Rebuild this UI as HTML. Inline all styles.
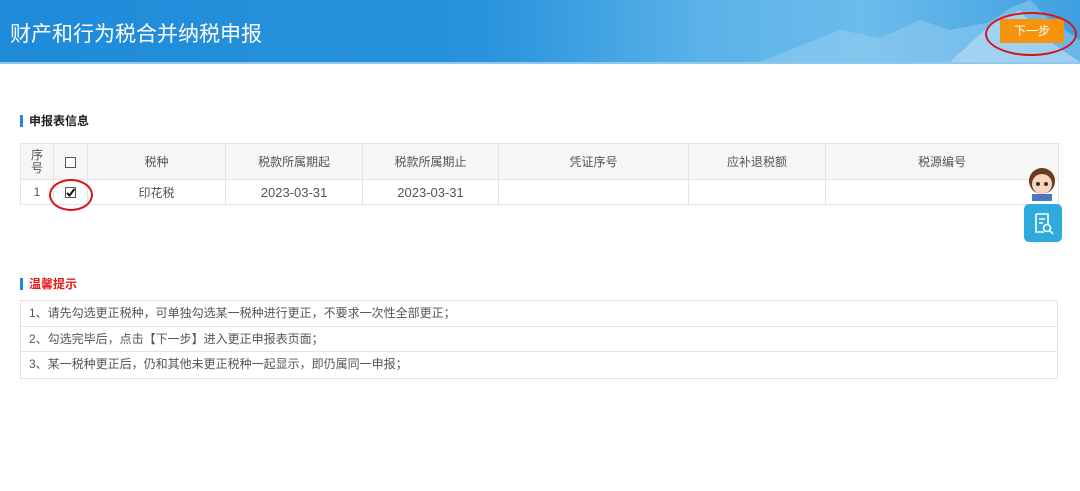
<!DOCTYPE html>
<html><head><meta charset="utf-8"><style>
*{margin:0;padding:0;box-sizing:border-box}
body{width:1080px;height:491px;background:#fff;font-family:"Liberation Sans","Noto Sans CJK SC",sans-serif;position:relative;overflow:hidden}
.hd{position:absolute;left:0;top:0;width:1080px;height:64px;background:linear-gradient(90deg,#1f8ad8 0%,#2893dc 45%,#5ab2e8 65%,#6cbcec 80%,#3d9fe0 100%);border-bottom:2px solid #8cc8f0}
.hd h1{position:absolute;left:10px;top:18px;font-size:21px;font-weight:normal;color:#fff;letter-spacing:0px}
.btn{position:absolute;left:1000px;top:19px;width:64px;height:24px;background:#f7940f;color:#fff;font-size:12px;text-align:center;line-height:24px}
.ell{position:absolute;border:2.5px solid #d8141c;border-radius:50%}
.sec{position:absolute;left:20px;font-size:12px;font-weight:bold;border-left:3px solid #1e88e5;padding-left:6px;line-height:12px}
table{position:absolute;left:20px;border-collapse:collapse;font-size:12px;color:#555}
td{border:1px solid #e3e3e3;text-align:center}
.th td{background:#f6f6f6}
.cb{display:inline-block;width:11px;height:11px;border:1px solid #555;vertical-align:middle;position:relative;background:#fff}
.tips{position:absolute;left:20px;top:300px;width:1038px;border:1px solid #e3e3e3;font-size:12px;color:#555}
.tips div{height:25.5px;line-height:25px;padding-left:8px;border-bottom:1px solid #e3e3e3}
.tips div:last-child{border-bottom:none}
</style></head><body>
<div class="hd"><h1>财产和行为税合并纳税申报</h1>
<svg style="position:absolute;left:720px;top:0" width="360" height="62"><path d="M40 62 L120 30 L160 38 L200 20 L230 30 L270 22 L290 8 L310 0 L330 20 L360 40 L360 62Z" fill="#9fd2f2" opacity=".45"/><path d="M230 62 L270 25 L300 10 L320 35 L360 62Z" fill="#cde8f8" opacity=".5"/></svg>
<div class="btn">下一步</div></div>
<div class="ell" style="left:985px;top:12px;width:92px;height:44px"></div>
<div class="sec" style="top:115px;color:#222">申报表信息</div>
<table style="top:143px;width:1039px">
<tr class="th" style="height:36px"><td style="width:33px;line-height:13px">序<br>号</td><td style="width:34px"><span class="cb"></span></td><td style="width:138px">税种</td><td style="width:137px">税款所属期起</td><td style="width:136px">税款所属期止</td><td style="width:190px">凭证序号</td><td style="width:137px">应补退税额</td><td>税源编号</td></tr>
<tr style="height:25px"><td>1</td><td><span class="cb"><svg width="11" height="11" style="position:absolute;left:-1px;top:-1px"><path d="M2 6 L4.5 8.5 L9.5 2" stroke="#111" stroke-width="2" fill="none"/></svg></span></td><td>印花税</td><td style="font-size:13px">2023-03-31</td><td style="font-size:13px">2023-03-31</td><td></td><td></td><td></td></tr>
</table>
<div class="ell" style="left:49px;top:179px;width:44px;height:32px"></div>
<svg style="position:absolute;left:1022px;top:163px" width="40" height="38"><circle cx="20" cy="18" r="13" fill="#6b3a22"/><ellipse cx="20" cy="21" rx="10" ry="10" fill="#f7d6bd"/><circle cx="16" cy="21" r="2" fill="#333"/><circle cx="24" cy="21" r="2" fill="#333"/><rect x="10" y="31" width="20" height="7" fill="#4a78b8"/></svg>
<div style="position:absolute;left:1024px;top:204px;width:38px;height:38px;background:#2eaadf;border-radius:5px"><svg width="38" height="38"><path d="M12 10 H24 V20 M12 10 V28 H20 M15 15 H21 M15 19 H19" stroke="#fff" stroke-width="1.6" fill="none"/><circle cx="23" cy="24" r="3.5" stroke="#fff" stroke-width="1.6" fill="none"/><path d="M25.5 26.5 L29 30" stroke="#fff" stroke-width="1.6"/></svg></div>
<div class="sec" style="top:278px;color:#e01b1b">温馨提示</div>
<div class="tips"><div>1、请先勾选更正税种，可单独勾选某一税种进行更正，不要求一次性全部更正；</div><div>2、勾选完毕后，点击【下一步】进入更正申报表页面；</div><div>3、某一税种更正后，仍和其他未更正税种一起显示，即仍属同一申报；</div></div>
</body></html>
